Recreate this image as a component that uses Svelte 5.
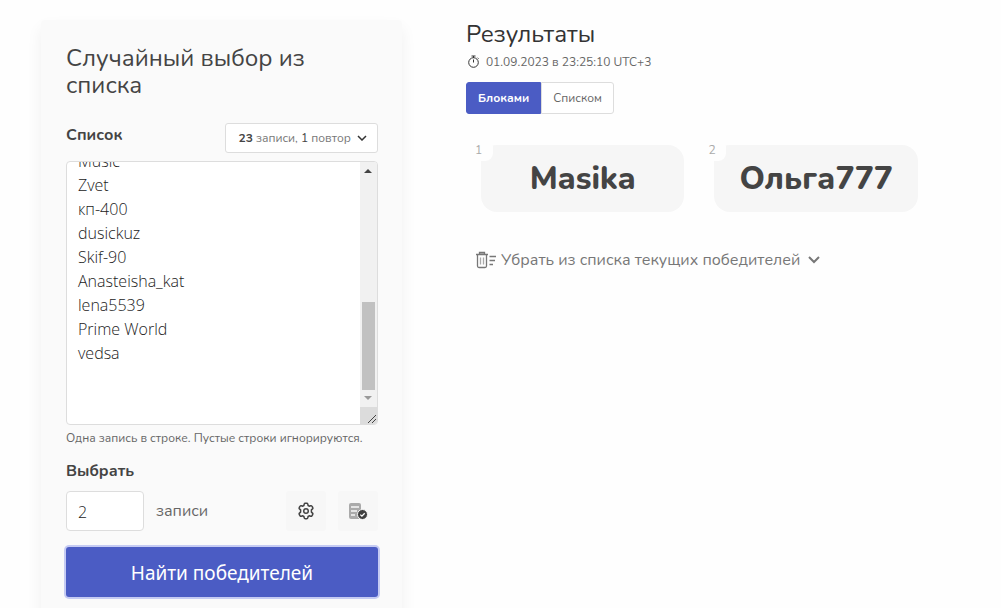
<script>
  import { onMount } from 'svelte';

  let entries = [
    'Marina', 'Lisa88', 'Olga_K', 'Ольга777', 'Masika', 'Tatiana',
    'Sveta-12', 'alexrus', 'Kroshka', 'Irina2010', 'Masika', 'Vikulya',
    'natali', 'Dasha', 'Music', 'Zvet', 'кп-400', 'dusickuz',
    'Skif-90', 'Anasteisha_kat', 'lena5539', 'Prime World', 'vedsa'
  ].join('\n') + '\n\n';

  let count = 2;
  let view = 'blocks';
  let winners = ['Masika', 'Ольга777'];

  let area;
  let thumbTop = 0;
  let thumbHeight = 100;

  $: names = entries.split('\n').filter(name => name.trim());
  $: repeats = names.length - new Set(names).size;

  const updateThumb = () => {
    thumbTop = area.scrollTop / area.scrollHeight * 100;
    thumbHeight = area.clientHeight / area.scrollHeight * 100;
  }

  const pickWinners = () => {
    const pool = [...new Set(names)];
    const picked = [];

    while (pool.length && picked.length < count) {
      picked.push(pool.splice(Math.floor(Math.random() * pool.length), 1)[0]);
    }

    winners = picked;
  }

  onMount(() => {
    area.scrollTop = area.scrollHeight;
    updateThumb();
  });
</script>

<main>
  <section class="card">
    <h1>Случайный выбор из списка</h1>

    <div class="row">
      <label class="title" for="entries">Список</label>
      <button class="summary" aria-haspopup="true">
        <span><b>{names.length}</b> записи, <i>{repeats}</i> повтор</span>
        <svg width="10" height="6" viewBox="0 0 10 6"><path d="M1 1l4 4 4-4" /></svg>
      </button>
    </div>

    <div class="editor">
      <textarea id="entries" bind:this={area} bind:value={entries} on:scroll={updateThumb} spellcheck="false"></textarea>
      <div class="scrollbar" aria-hidden="true">
        <svg class="arrow" width="8" height="4" viewBox="0 0 8 4"><path d="M0 4l4-4 4 4z" /></svg>
        <div class="track">
          <div class="thumb" style="top: {thumbTop}%; height: {thumbHeight}%"></div>
        </div>
        <svg class="arrow end" width="8" height="4" viewBox="0 0 8 4"><path d="M0 0h8l-4 4z" /></svg>
        <div class="grip">
          <svg width="10" height="10" viewBox="0 0 10 10"><path d="M1 9l8-8M5 9l4-4" /></svg>
        </div>
      </div>
    </div>
    <p class="hint">Одна запись в строке. Пустые строки игнорируются.</p>

    <label class="title" for="count">Выбрать</label>
    <div class="row options">
      <input id="count" type="number" min="1" bind:value={count} />
      <span class="unit">записи</span>
      <button class="tool" aria-label="Настройки">
        <svg class="gear" width="18" height="18" viewBox="0 0 18 18">
          <path d="M7.2 2.2q.2-.9 1.100-.9h1.400q.9 0 1.100.9l.3 1.300 1.100.7 1.500-.5q.8-.2 1.200.5l.8 1.300q.4.8-.2 1.400l-1.100 1v2.200l1.100 1q.6.6.2 1.400l-.8 1.300q-.4.7-1.200.5l-1.500-.5-1.100.7-.3 1.300q-.2.9-1.100.9H8.300q-.9 0-1.100-.9l-.3-1.300-1.100-.7-1.500.5q-.8.2-1.200-.5l-.8-1.300q-.4-.8.2-1.400l1.100-1V7.900l-1.100-1q-.6-.6-.2-1.400l.8-1.300q.4-.7 1.200-.5l1.500.5 1.100-.7z" />
          <circle cx="9" cy="9" r="2.3" />
        </svg>
      </button>
      <button class="tool" aria-label="Проверка">
        <svg width="20" height="18" viewBox="0 0 20 18">
          <rect x="1" y="1" width="12" height="16" rx="2" fill="#aaa" stroke="none" />
          <path d="M3 5h8M3 9h6M3 13h4" stroke="#f7f7f7" stroke-width="1.3" />
          <circle cx="14.5" cy="12.5" r="5" fill="#3f3f3f" stroke="#f7f7f7" />
          <path d="M12.3 12.6l1.6 1.5 2.8-2.9" fill="none" stroke="#fff" stroke-width="1.3" />
        </svg>
      </button>
    </div>

    <button class="submit" on:click={pickWinners}>Найти победителей</button>
  </section>

  <section class="results">
    <h2>Результаты</h2>
    <p class="date">
      <svg width="14" height="14" viewBox="0 0 14 14">
        <circle cx="7.5" cy="7.5" r="4.8" />
        <path d="M5.5 1h4M7.5 1v2M7.5 4.5v3M11.5 2.7l1 1" />
      </svg>
      01.09.2023 в 23:25:10 UTC+3
    </p>

    <div class="tabs">
      <button class:active={view === 'blocks'} on:click={() => view = 'blocks'}>Блоками</button>
      <button class:active={view === 'list'} on:click={() => view = 'list'}>Списком</button>
    </div>

    <ol class="winners" class:list={view === 'list'}>
      {#each winners as name, i}
        <li>
          <span class="number">{i + 1}</span>
          {name}
        </li>
      {/each}
    </ol>

    <button class="remove" aria-haspopup="true">
      <svg width="21" height="18" viewBox="0 0 21 18">
        <path d="M4.5 3V1.5h5V3" fill="#bbb" />
        <path d="M1 3.5h12M2.5 3.5V15a1.5 1.5 0 0 0 1.5 1.5h6a1.5 1.5 0 0 0 1.5-1.5V3.5M14.5 5.5H21M14.5 9.5H20M14.5 13.5H18" />
        <path d="M5.5 6.5v7M8.5 6.5v7" stroke="#aaa" />
      </svg>
      <span>Убрать из списка текущих победителей</span>
      <svg class="chevron" width="12" height="8" viewBox="0 0 12 8"><path d="M1 1l5 5 5-5" /></svg>
    </button>
  </section>
</main>

<style>
  :global(body) {
    margin: 0;
    background: #fefefe;
  }

  main {
    display: grid;
    grid-template-columns: minmax(0, 17fr) minmax(0, 22fr);
    gap: 64px;
    align-items: start;
    padding: 20px 68px 20px 41px;
    font-family: Nunito, sans-serif;
    font-size: 16px;
    line-height: 24px;
    color: #444;
  }

  .card {
    padding: 25px 24px 25px 25px;
    border-radius: 4px;
    background: #fafafa;
    box-shadow: 0 8px 16px rgba(0, 0, 0, 0.06);
  }

  h1, h2 {
    margin: 0;
    font-size: 24px;
    line-height: 27px;
    font-weight: 400;
  }

  h1 {
    margin-bottom: 24px;
  }

  h2 {
    padding-top: 1px;
    color: #333;
  }

  p {
    margin: 0;
  }

  button {
    padding: 0;
    border: none;
    font: inherit;
    color: inherit;
    cursor: pointer;
  }

  svg {
    flex: none;
    fill: none;
    stroke: currentColor;
  }

  .row {
    display: flex;
    justify-content: space-between;
    margin-bottom: 8px;
  }

  .title {
    font-weight: 700;
  }

  .summary {
    display: flex;
    align-items: center;
    gap: 6px;
    height: 30px;
    padding: 0 10px 0 12px;
    border: 1px solid #ddd;
    border-radius: 3px;
    background: #fff;
    font-size: 12px;
    color: #777;
  }

  .summary b, .summary i {
    font-style: normal;
    color: #444;
  }

  .summary svg {
    stroke: #333;
    stroke-width: 1.5;
  }

  .editor {
    display: flex;
    height: 262px;
    border: 1px solid #ddd;
    border-radius: 4px;
    background: #fff;
    overflow: hidden;
  }

  textarea, input {
    box-sizing: border-box;
    font-family: "Segoe UI", "Open Sans", sans-serif;
    font-size: 16px;
    line-height: 24px;
    font-weight: 300;
    color: #222;
    outline: none;
  }

  textarea {
    flex: 1;
    min-width: 0;
    margin: 0;
    padding: 11px;
    border: none;
    background: none;
    resize: none;
    scrollbar-width: none;
  }

  .scrollbar {
    display: flex;
    flex-direction: column;
    align-items: center;
    width: 17px;
    background: #f1f1f1;
  }

  .arrow {
    margin: 7px 0;
    fill: #444;
    stroke: none;
  }

  .arrow.end {
    margin: 6px 0 7px;
    fill: #999;
  }

  .track {
    position: relative;
    flex: 1;
    width: 13px;
  }

  .thumb {
    position: absolute;
    width: 100%;
    background: #c1c1c1;
  }

  .grip {
    display: flex;
    align-items: flex-end;
    justify-content: flex-end;
    width: 17px;
    height: 17px;
    background: #dcdcdc;
  }

  .hint {
    margin: 4px 0 12px;
    font-size: 12px;
    line-height: 18px;
    color: #666;
  }

  .options {
    align-items: center;
    gap: 12px;
    margin: 8px 0 16px;
  }

  input {
    width: 78px;
    height: 40px;
    padding: 2px 11px 0;
    border: 1px solid #ddd;
    border-radius: 4px;
    background: #fff;
    appearance: textfield;
  }

  .unit {
    flex: 1;
    color: #666;
  }

  .tool {
    display: flex;
    align-items: center;
    justify-content: center;
    width: 40px;
    height: 40px;
    border-radius: 3px;
    background: #f7f7f7;
  }

  .gear {
    stroke-width: 1.5;
    stroke-linejoin: round;
  }

  .submit {
    display: block;
    width: 100%;
    height: 50px;
    padding-top: 2px;
    border-radius: 3px;
    background: #4b5cc4;
    box-shadow: 0 0 0 2px #c5cbf3;
    font-family: "Segoe UI", "Noto Sans", sans-serif;
    font-size: 19px;
    color: #fff;
  }

  .date {
    display: flex;
    align-items: center;
    gap: 6px;
    margin: 2px 0 8px;
    font-size: 12px;
    color: #666;
  }

  .date svg {
    color: #333;
  }

  .tabs {
    display: flex;
  }

  .tabs button {
    height: 32px;
    padding: 0 11px;
    border: 1px solid #ddd;
    border-radius: 0 3px 3px 0;
    background: #fff;
    font-size: 12px;
    color: #666;
  }

  .tabs button:first-child {
    border-radius: 3px 0 0 3px;
  }

  .tabs .active {
    border-color: #4b5cc4;
    background: #4b5cc4;
    font-weight: 700;
    color: #fff;
  }

  .winners {
    display: grid;
    grid-template-columns: 1fr 1fr;
    gap: 30px;
    margin: 31px 15px 36px;
    padding: 0;
    list-style: none;
  }

  .winners.list {
    grid-template-columns: 1fr;
  }

  .winners li {
    position: relative;
    padding: 14px 0 13px;
    border-radius: 16px;
    background: #f6f6f6;
    font-size: 32px;
    line-height: 40px;
    font-weight: 800;
    text-align: center;
  }

  .number {
    position: absolute;
    top: -6px;
    left: -10px;
    width: 22px;
    height: 22px;
    padding-left: 4px;
    box-sizing: border-box;
    border-radius: 8px;
    background: #fefefe;
    font-size: 12px;
    line-height: 22px;
    font-weight: 400;
    text-align: left;
    color: #aaa;
  }

  .remove {
    display: flex;
    align-items: center;
    gap: 5px;
    margin-left: 9px;
    background: none;
    color: #777;
  }

  .remove svg {
    stroke-width: 1.3;
  }

  .remove .chevron {
    margin-left: 3px;
    stroke-width: 2;
  }
</style>
